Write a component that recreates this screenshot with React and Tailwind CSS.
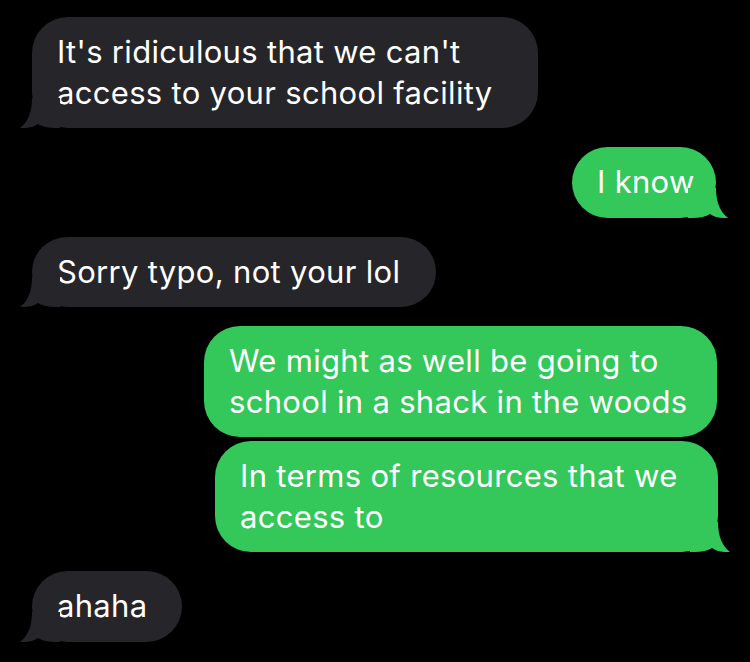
const GRAY = '#262529'
const GREEN = '#34c759'

function Tail({ side, color }) {
  const pos = side === 'left' ? 'left-[-12px] bottom-0' : 'right-[-12px] bottom-0 -scale-x-100'
  return (
    <svg className={`absolute ${pos}`} width="40" height="30" viewBox="0 0 40 30">
      <path
        d="M12 0 C12 14 8 24 0 30 C8 30.5 14 29 18 26 C22 28.5 28 30 36 30 L40 30 L40 0 Z"
        fill={color}
      />
    </svg>
  )
}

function Bubble({ side, tail = true, children, className = '' }) {
  const color = side === 'left' ? GRAY : GREEN
  return (
    <div
      className={`relative rounded-[36px] px-[25px] py-[15px] text-white text-[31px] leading-[40.5px] tracking-[0.01em] whitespace-nowrap ${className}`}
      style={{ backgroundColor: color }}
    >
      {tail && <Tail side={side} color={color} />}
      {children}
    </div>
  )
}

export default function App() {
  return (
    <div className="w-[750px] h-[662px] bg-black overflow-hidden pt-[17px] pl-[32px] pr-[33px] flex flex-col" style={{ fontFamily: 'Inter, "Noto Sans", sans-serif' }}>
      <div className="flex">
        <Bubble side="left" className="w-[506px]">
          It's ridiculous that we can't<br />access to your school facility
        </Bubble>
      </div>

      <div className="flex justify-end mt-[19px] mr-[1px]">
        <Bubble side="right" className="w-[144px]">I know</Bubble>
      </div>

      <div className="flex mt-[19px]">
        <Bubble side="left" className="w-[404px]">Sorry typo, not your lol</Bubble>
      </div>

      <div className="flex flex-col items-end mt-[19px] gap-[4px]">
        <Bubble side="right" tail={false} className="w-[513px]">
          We might as well be going to<br />school in a shack in the woods
        </Bubble>
        <Bubble side="right" className="w-[503px] -mr-[1px]">
          In terms of resources that we<br />access to
        </Bubble>
      </div>

      <div className="flex mt-[19px]">
        <Bubble side="left" className="w-[150px]">ahaha</Bubble>
      </div>
    </div>
  )
}
